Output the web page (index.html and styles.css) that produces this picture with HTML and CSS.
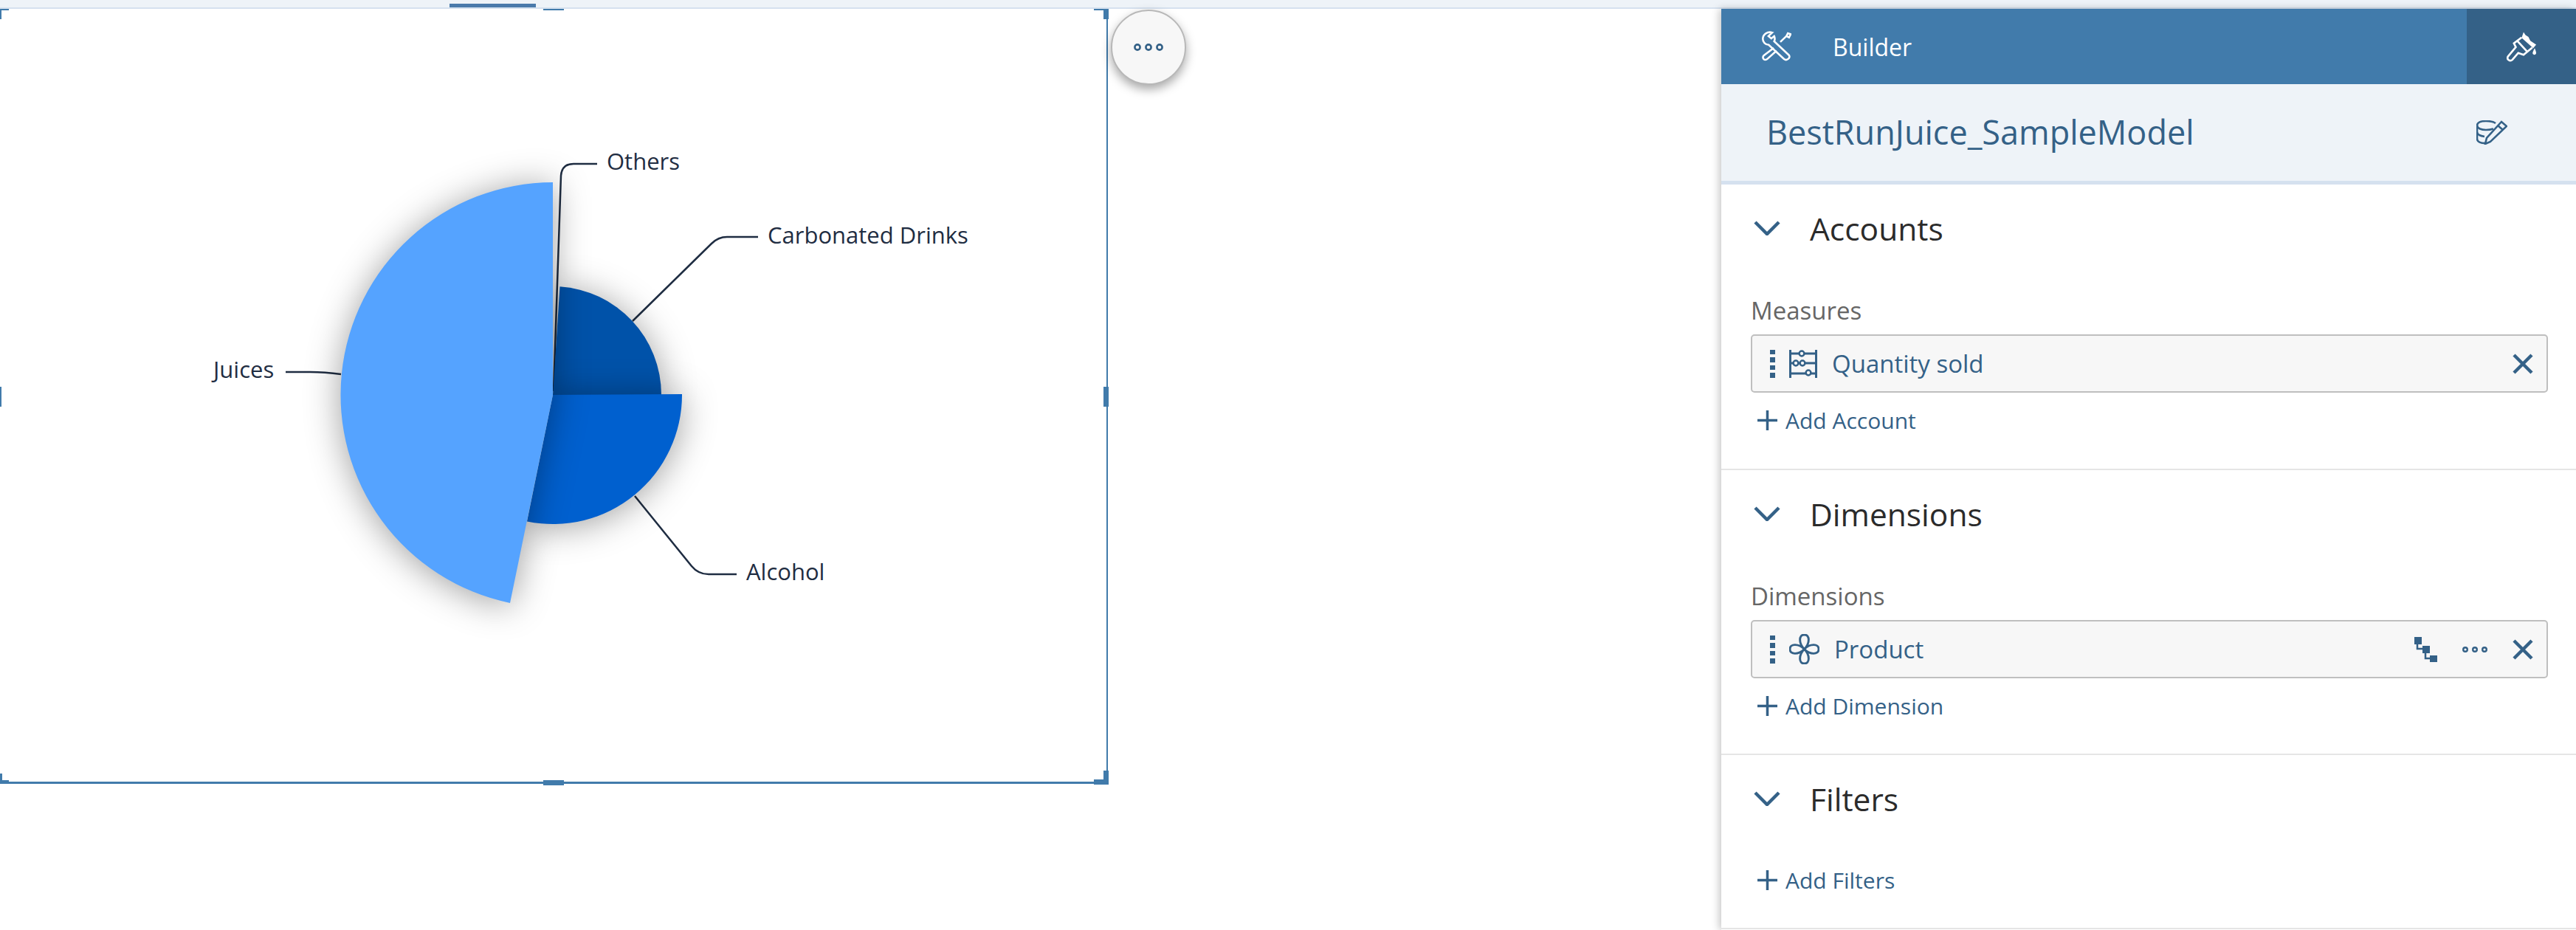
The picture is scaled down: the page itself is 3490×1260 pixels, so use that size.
FILE: index.html
```html
<!DOCTYPE html>
<html lang="en">
<head>
    <meta charset="UTF-8">
    <meta name="viewport" content="width=device-width, initial-scale=1.0">
    <title>Builder</title>
    <link rel="stylesheet" href="styles.css">
</head>
<body>
    <div class="top-strip">
        <div class="top-tab"></div>
    </div>

    <div class="workspace">
        <div class="canvas">
            <div class="widget">
                <svg class="chart" viewBox="0 12 1500 1050" width="1500" height="1050">
                    <g class="leaders">
                        <path d="M750 530 L760 238 Q761 222 777 222 L809 222"/>
                        <path d="M857 435 L964 330 Q973 321 985 321 L1027 321"/>
                        <path d="M387 504 L420 504 Q440 504 462 507"/>
                        <path d="M860 672 L937 767 Q946 778 960 778 L998 778"/>
                    </g>
                    <path class="slice slice-carbonated" d="M749 535 L758.5 388.3 A147 147 0 0 1 896 535 Z"/>
                    <path class="slice slice-alcohol" d="M749 535 L924 534 A175 175 0 0 1 714 706.5 Z"/>
                    <path class="slice slice-juices" d="M749 535 L749 247 A288 288 0 0 0 691 817 Z"/>
                    <text class="chart-label" x="822" y="230">Others</text>
                    <text class="chart-label" x="1040" y="330">Carbonated Drinks</text>
                    <text class="chart-label" x="289" y="512">Juices</text>
                    <text class="chart-label" x="1011" y="786">Alcohol</text>
                </svg>

                <span class="handle corner-tl"></span>
                <span class="handle corner-tr"></span>
                <span class="handle corner-bl"></span>
                <span class="handle corner-br"></span>
                <span class="handle mid-top"></span>
                <span class="handle mid-left"></span>
                <span class="handle mid-right"></span>
                <span class="handle mid-bottom"></span>

                <div class="more-button">
                    <svg class="icon-dots" viewBox="0 0 40 10" width="40" height="10">
                        <circle cx="5" cy="5" r="3.6"/><circle cx="20" cy="5" r="3.6"/><circle cx="35" cy="5" r="3.6"/>
                    </svg>
                </div>
            </div>
        </div>

        <div class="panel">
            <div class="panel-header">
                <div class="panel-title">
                    <svg class="icon-tools" viewBox="0 0 125 128" width="40" height="42">
                        <path d="M44 5 C24 -1 4 12 4 32 C4 46 15 57 29 57 L94 117 C106 127 124 110 114 100 L52 42 C56 34 55 26 52 20 L40 30 L28 20 Z"/>
                        <path d="M50 70 L8 102 C-2 112 12 128 24 116 L62 82"/>
                        <path d="M78 45 L104 20 M104 20 L110 8 L122 12 L115 26 Z"/>
                    </svg>
                    <span class="panel-title-text">Builder</span>
                </div>
                <div class="panel-tab">
                    <svg class="icon-brush" viewBox="0 0 125 122" width="41" height="41">
                        <path class="brush-top" d="M70 0 L78 12 L90 20 L98 36 L122 52 L110 66 L62 24 Z"/>
                        <path class="brush-body" d="M62 22 L30 46 L38 62 L6 100 C-2 112 14 124 24 114 L48 86 L70 94 L106 64"/>
                        <path class="brush-line" d="M44 36 L84 80"/>
                        <path class="brush-top" d="M116 66 C110 78 106 84 108 90 C112 96 122 94 122 86 C122 80 118 72 116 66 Z"/>
                    </svg>
                </div>
            </div>

            <div class="model-row">
                <span class="model-name">BestRunJuice_SampleModel</span>
                <svg class="icon-model" viewBox="0 0 42 33" width="42" height="33">
                    <path d="M26 4 C22 1 17 1 13 1 C6 1 1 3 1 7 L1 25 C1 29 6 31 12 31"/>
                    <path d="M1 7 C1 11 7 13 13 13 C17 13 20 12.500 23 11.500"/>
                    <path d="M1 16 C1 19 5 21 11 22"/>
                    <path d="M34 2 L41 8 L19 29 L12 32 L14 24 Z"/>
                    <path d="M29 7 L36 13"/>
                </svg>
            </div>

            <section class="section section-accounts">
                <div class="section-head">
                    <svg class="chevron" viewBox="0 0 36 20" width="36" height="20"><path d="M2 2 L18 18 L34 2"/></svg>
                    <span class="section-title">Accounts</span>
                </div>
                <div class="field-label">Measures</div>
                <div class="chip">
                    <span class="grip"><i></i><i></i><i></i><i></i></span>
                    <svg class="icon-abacus" viewBox="0 0 38 38" width="38" height="38">
                        <path d="M1.500 0 V38 M36.500 0 V38 M1.500 5 H36.500 M1.500 18 H36.500 M1.500 32 H36.500"/>
                        <circle cx="17" cy="5" r="3.400"/><circle cx="9" cy="18" r="3.400"/><circle cx="18" cy="18" r="3.400"/><circle cx="26" cy="31" r="3.400"/>
                    </svg>
                    <span class="chip-text">Quantity sold</span>
                    <svg class="icon-close" viewBox="0 0 28 28" width="28" height="28"><path d="M2 2 L26 26 M26 2 L2 26"/></svg>
                </div>
                <div class="add-link">
                    <svg class="icon-plus" viewBox="0 0 27 27" width="27" height="27"><path d="M13.500 0 V27 M0 13.500 H27"/></svg>
                    <span>Add Account</span>
                </div>
            </section>

            <section class="section section-dimensions">
                <div class="section-head">
                    <svg class="chevron" viewBox="0 0 36 20" width="36" height="20"><path d="M2 2 L18 18 L34 2"/></svg>
                    <span class="section-title">Dimensions</span>
                </div>
                <div class="field-label">Dimensions</div>
                <div class="chip">
                    <span class="grip"><i></i><i></i><i></i><i></i></span>
                    <svg class="icon-flower" viewBox="0 0 42 42" width="41" height="41">
                        <path d="M21 21 C13 13 13 1 21 1 C29 1 29 13 21 21 C29 13 41 13 41 21 C41 29 29 29 21 21 C29 29 29 41 21 41 C13 41 13 29 21 21 C13 29 1 29 1 21 C1 13 13 13 21 21 Z"/>
                    </svg>
                    <span class="chip-text">Product</span>
                    <svg class="icon-hierarchy" viewBox="0 0 32 34" width="32" height="34">
                        <rect x="0" y="0" width="10" height="10"/><rect x="11" y="12" width="10" height="10"/><rect x="21" y="25" width="10" height="9"/>
                        <path class="hierarchy-line" d="M4 10 V16 H11 M15 22 V29 H21"/>
                    </svg>
                    <svg class="icon-chip-dots" viewBox="0 0 34 8" width="34" height="8">
                        <circle cx="4" cy="4" r="2.800"/><circle cx="17" cy="4" r="2.800"/><circle cx="30" cy="4" r="2.800"/>
                    </svg>
                    <svg class="icon-close icon-close-near" viewBox="0 0 28 28" width="28" height="28"><path d="M2 2 L26 26 M26 2 L2 26"/></svg>
                </div>
                <div class="add-link">
                    <svg class="icon-plus" viewBox="0 0 27 27" width="27" height="27"><path d="M13.500 0 V27 M0 13.500 H27"/></svg>
                    <span>Add Dimension</span>
                </div>
            </section>

            <section class="section section-filters">
                <div class="section-head">
                    <svg class="chevron" viewBox="0 0 36 20" width="36" height="20"><path d="M2 2 L18 18 L34 2"/></svg>
                    <span class="section-title">Filters</span>
                </div>
                <div class="add-link add-link-filters">
                    <svg class="icon-plus" viewBox="0 0 27 27" width="27" height="27"><path d="M13.500 0 V27 M0 13.500 H27"/></svg>
                    <span>Add Filters</span>
                </div>
            </section>
        </div>
    </div>
</body>
</html>
```

FILE: styles.css
```css
html, body {
    margin: 0;
    height: 1260px;
    overflow: hidden;
    background: #fff;
    font-family: 'Open Sans', 'Noto Sans', sans-serif;
}

.top-strip {
    height: 10px;
    background: #eef3f8;
    border-bottom: 2px solid #d5e1ef;
}

.top-tab {
    width: 117px;
    height: 5px;
    margin-left: 609px;
    position: relative;
    top: 5px;
    background: #4a7aab;
}

.workspace {
    display: flex;
    height: 1248px;
}

.canvas {
    flex: 1;
}

/* chart widget */
.widget {
    position: relative;
    width: 1501px;
    height: 1050px;
    box-sizing: border-box;
    border-right: 2px solid #417bab;
    border-bottom: 3px solid #417bab;
}

.chart {
    display: block;
    overflow: visible;
}

.leaders path {
    fill: none;
    stroke: #1f2d42;
    stroke-width: 2.5;
}

.slice {
    filter: drop-shadow(0 4px 24px rgba(0, 0, 0, 0.38));
}

.slice-carbonated { fill: #0052a9; }
.slice-alcohol { fill: #0060cf; }
.slice-juices { fill: #55a3ff; }

.chart-label {
    font-size: 31px;
    fill: #1f2d42;
}

.handle {
    position: absolute;
    background: #417bab;
}

.corner-tl { left: 0; top: 0; width: 12px; height: 2px; }
.corner-tl::after { content: ""; position: absolute; left: 0; top: 0; width: 2px; height: 14px; background: #417bab; }
.corner-tr { right: -3px; top: 0; width: 7px; height: 14px; }
.corner-tr::after { content: ""; position: absolute; right: 7px; top: 0; width: 13px; height: 2px; background: #417bab; }
.corner-bl { left: 0; bottom: -3px; width: 12px; height: 5px; }
.corner-bl::after { content: ""; position: absolute; left: 0; bottom: 0; width: 3px; height: 14px; background: #417bab; }
.corner-br { right: -3px; bottom: -4px; width: 20px; height: 7px; }
.corner-br::after { content: ""; position: absolute; right: 0; bottom: 0; width: 7px; height: 19px; background: #417bab; }
.mid-top { left: 736px; top: 0; width: 28px; height: 2px; }
.mid-left { left: 0; top: 512px; width: 2px; height: 27px; }
.mid-right { right: -3px; top: 512px; width: 7px; height: 27px; }
.mid-bottom { left: 736px; bottom: -5px; width: 28px; height: 7px; }

.more-button {
    position: absolute;
    left: 1505px;
    top: 1px;
    width: 102px;
    height: 102px;
    box-sizing: border-box;
    display: flex;
    align-items: center;
    justify-content: center;
    background: #f7f7f7;
    border: 2px solid #b8b8b8;
    border-radius: 50%;
    box-shadow: 0 6px 14px rgba(0, 0, 0, 0.35);
}

.icon-dots circle {
    fill: none;
    stroke: #346187;
    stroke-width: 2.6;
}

/* builder panel */
.panel {
    width: 1158px;
    background: #fff;
    box-shadow: -3px 0 10px rgba(0, 0, 0, 0.22);
}

.panel-header {
    display: flex;
    height: 102px;
    background: #417bab;
    color: #fff;
}

.panel-title {
    flex: 1;
    display: flex;
    align-items: center;
    padding-left: 55px;
    font-size: 32px;
}

.panel-title-text {
    margin-left: 56px;
}

.icon-tools path {
    fill: none;
    stroke: #fff;
    stroke-width: 8;
}

.panel-tab {
    width: 148px;
    display: flex;
    align-items: center;
    justify-content: center;
    background: #346187;
}

.brush-top { fill: #fff; }
.brush-body, .brush-line {
    fill: none;
    stroke: #fff;
    stroke-width: 8;
}

.model-row {
    display: flex;
    align-items: center;
    justify-content: space-between;
    height: 131px;
    box-sizing: content-box;
    padding: 0 93px 0 61px;
    background: #eef3f8;
    border-bottom: 5px solid #d5e1ef;
    color: #346187;
}

.model-name {
    position: relative;
    top: -1px;
    font-size: 45px;
}

.icon-model path {
    fill: none;
    stroke: #346187;
    stroke-width: 2.6;
}

.section {
    height: 387px;
    box-sizing: border-box;
    padding: 0 38px 0 40px;
    border-bottom: 2px solid #e5e5e5;
}

.section-dimensions {
    height: 386px;
}

.section-filters {
    height: 236px;
}

.section-head {
    display: flex;
    align-items: center;
    height: 120px;
    box-sizing: border-box;
    padding-bottom: 2px;
}

.chevron {
    margin-left: 4px;
}

.chevron path {
    fill: none;
    stroke: #346187;
    stroke-width: 4.500;
}

.section-title {
    margin-left: 40px;
    font-size: 42.500px;
    color: #2b2b2b;
}

.field-label {
    height: 40px;
    margin-top: 31px;
    line-height: 40px;
    font-size: 33px;
    color: #666;
}

.chip {
    display: flex;
    align-items: center;
    height: 79px;
    box-sizing: border-box;
    margin-top: 12px;
    padding: 0 18px 0 24px;
    background: #f7f7f7;
    border: 2px solid #bfbfbf;
    border-radius: 5px;
    color: #346187;
    font-size: 33px;
}

.grip {
    display: flex;
    flex-direction: column;
    gap: 4px;
    width: 26px;
}

.grip i {
    display: block;
    width: 7px;
    height: 6.500px;
    background: #346187;
}

.chip-text {
    flex: 1;
    margin-left: 20px;
}

.icon-abacus path {
    fill: none;
    stroke: #346187;
    stroke-width: 3;
}

.icon-abacus circle {
    fill: #f7f7f7;
    stroke: #346187;
    stroke-width: 2.500;
}

.icon-flower path {
    fill: none;
    stroke: #346187;
    stroke-width: 3;
}

.icon-hierarchy rect { fill: #346187; }
.hierarchy-line {
    fill: none;
    stroke: #346187;
    stroke-width: 2.500;
}

.icon-chip-dots {
    margin-left: 33px;
}

.icon-chip-dots circle {
    fill: none;
    stroke: #346187;
    stroke-width: 2.400;
}

.icon-close path {
    fill: none;
    stroke: #346187;
    stroke-width: 4.500;
}

.icon-close-near {
    margin-left: 34px;
}

.add-link {
    display: flex;
    align-items: center;
    gap: 11px;
    height: 40px;
    margin-top: 17px;
    padding-left: 9px;
    font-size: 30px;
    color: #346187;
}

.add-link-filters {
    margin-top: 29px;
}

.icon-plus path {
    fill: none;
    stroke: #346187;
    stroke-width: 3.500;
}
```
